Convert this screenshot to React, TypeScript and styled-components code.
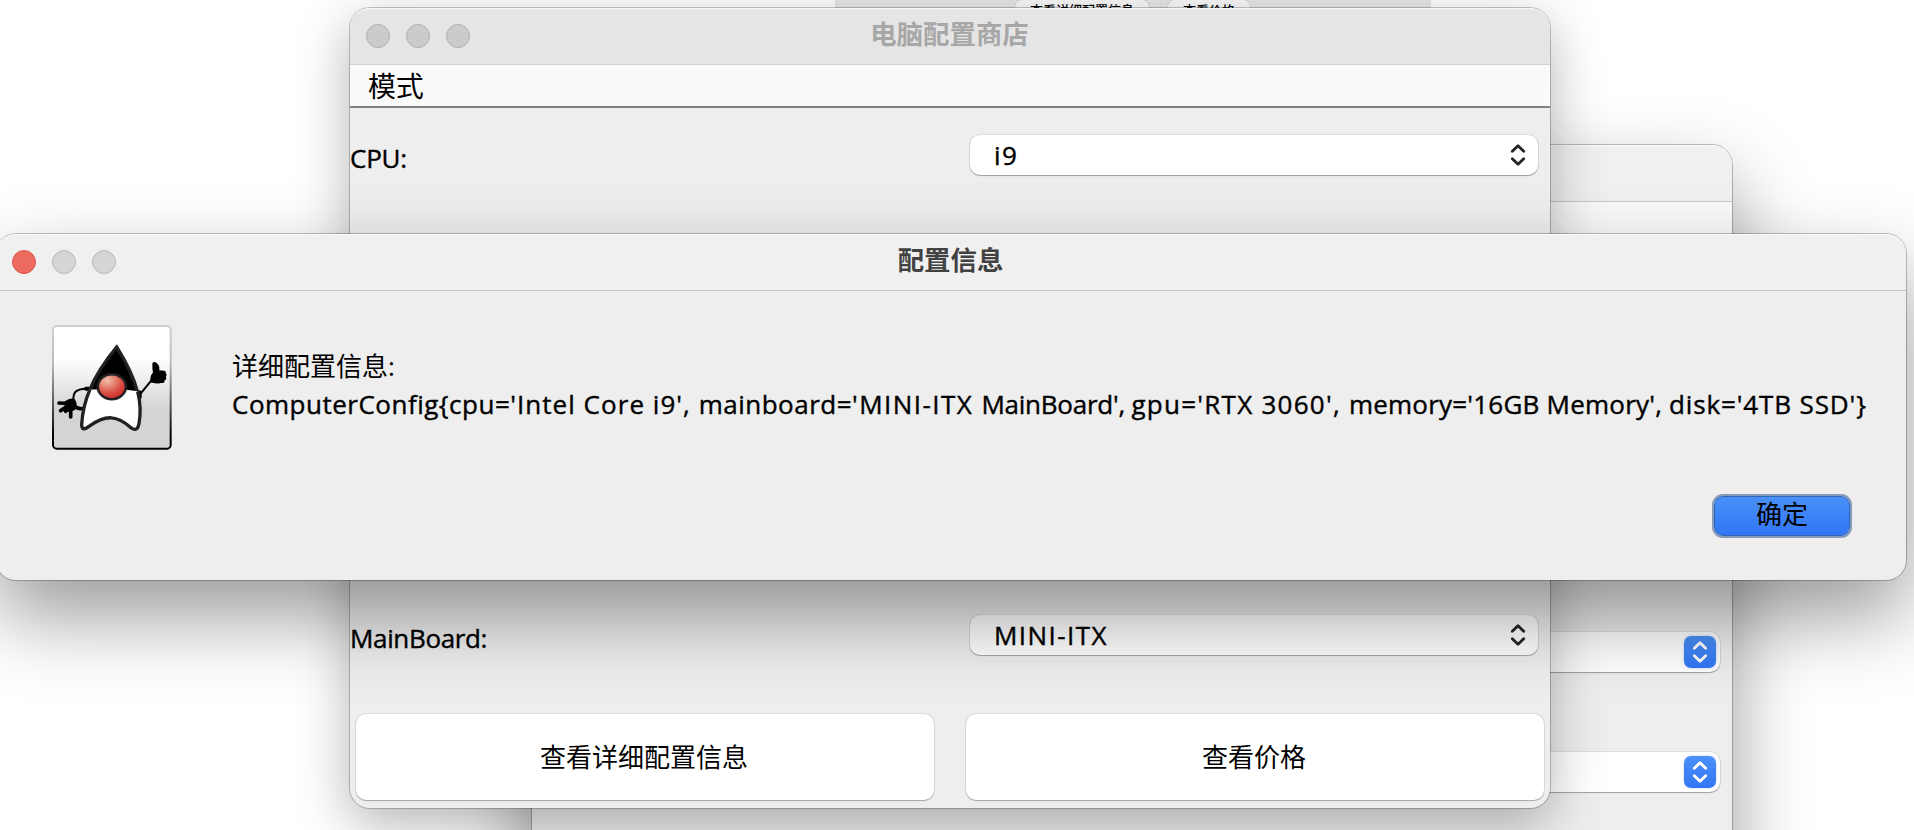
import React from "react";
import styled, { createGlobalStyle, css } from "styled-components";

const GlobalStyle = createGlobalStyle`
  html, body, #root { margin: 0; height: 100%; }
  body {
    overflow: hidden;
    background: #fff;
    color: #000;
    font: 26px/30px "Open Sans", "Noto Sans CJK SC", sans-serif;
  }
  * { box-sizing: border-box; }
`;

const Desktop = styled.main`
  position: relative;
  width: 1914px;
  height: 830px;
  overflow: hidden;
`;

const Window = styled.section<{ $x: number; $y: number; $w: number; $h: number; $focused?: boolean }>`
  position: absolute;
  left: ${(p) => p.$x}px;
  top: ${(p) => p.$y}px;
  width: ${(p) => p.$w}px;
  height: ${(p) => p.$h}px;
  display: flex;
  flex-direction: column;
  border-radius: 20px;
  background: #eee;
  box-shadow: ${(p) =>
    p.$focused
      ? "0 0 0 1px rgba(0,0,0,.24), 0 36px 80px rgba(0,0,0,.4)"
      : "0 0 0 1px rgba(0,0,0,.22), 0 16px 54px rgba(0,0,0,.3)"};
`;

const TitleBar = styled.header<{ $dim?: boolean }>`
  flex: none;
  height: 57px;
  display: grid;
  grid-template-columns: 1fr auto 1fr;
  align-items: center;
  padding: 0 16px;
  border-radius: 20px 20px 0 0;
  background: ${(p) => (p.$dim ? "#e5e5e5" : "#f0f0f0")};
  border-bottom: 1px solid ${(p) => (p.$dim ? "#d0d0d0" : "#c6c6c6")};
  box-shadow: inset 0 2px 1px -1px #fafafa;
`;

const Lights = styled.div`
  display: flex;
  gap: 16px;
`;

const Light = styled.span<{ $tone: "red" | "idle" | "dim" }>`
  width: 24px;
  height: 24px;
  border-radius: 50%;
  ${(p) =>
    ({
      red: css`background: #ed6a5e; border: 1px solid #d8564b;`,
      idle: css`background: #d5d5d5; border: 1px solid #b9b9b9;`,
      dim: css`background: #cbcbcb; border: 1px solid #b1b1b1;`,
    })[p.$tone]}
`;

const Title = styled.h1<{ $dim?: boolean }>`
  margin: 0;
  padding: 0 1px 4px 0;
  font-size: 26.4px;
  line-height: 30px;
  font-weight: 700;
  color: ${(p) => (p.$dim ? "#a7a7a7" : "#424242")};
`;

const MenuBar = styled.nav`
  flex: none;
  height: 43px;
  padding: 4px 18px 0;
  background: #fafafa;
  border-bottom: 2px solid #808080;
  font-size: 28px;
  line-height: 34px;
  letter-spacing: -0.3px;
`;

const Form = styled.div`
  flex: 1;
  display: grid;
  grid-template-columns: 1fr 1fr;
  grid-template-rows: repeat(6, 100px);
  gap: 20px;
`;

const Label = styled.label<{ $row: number; $spacing: number }>`
  grid-row: ${(p) => p.$row};
  grid-column: 1;
  align-self: center;
  letter-spacing: ${(p) => p.$spacing}px;
  -webkit-text-stroke: 0.4px #000;
`;

const Select = styled.div<{ $row: number; $accent?: boolean; $spacing?: number }>`
  grid-row: ${(p) => p.$row};
  grid-column: 2;
  height: 40px;
  margin: 27px 12px 0 10px;
  padding: 0 ${(p) => (p.$accent ? 4 : 14)}px 0 24px;
  display: flex;
  align-items: center;
  justify-content: space-between;
  border-radius: 10px;
  background: #fff;
  letter-spacing: ${(p) => p.$spacing ?? 0}px;
  -webkit-text-stroke: 0.4px #000;
  box-shadow: 0 0 0 1px rgba(0,0,0,.07), 0 1px 1px rgba(0,0,0,.28);
`;

const Stepper = styled.span<{ $accent?: boolean }>`
  display: grid;
  place-items: center;
  width: ${(p) => (p.$accent ? 32 : 14)}px;
  height: 32px;
  border-radius: 7px;
  color: ${(p) => (p.$accent ? "#fff" : "#262626")};
  ${(p) =>
    p.$accent &&
    css`
      background: linear-gradient(#4a90f7, #3176f5);
      box-shadow: 0 0 3px rgba(50,120,245,.3);
    `}
`;

const PushButton = styled.button`
  grid-row: 6;
  margin: 6px 6px 8px;
  padding: 0 2px 1px 0;
  border: 0;
  border-radius: 10px;
  background: #fff;
  color: #000;
  font: inherit;
  box-shadow: 0 0 0 1px rgba(0,0,0,.07), 0 1px 1px rgba(0,0,0,.25);
`;

const Content = styled.div`
  flex: 1;
  display: flex;
  align-items: flex-start;
  padding: 34px 30px 0 56px;
`;

const Message = styled.div`
  margin: 22px 0 0 60px;
  display: grid;
  grid-auto-rows: 38px;
  align-items: center;
  white-space: nowrap;
`;

const Detail = styled.p`
  margin: 0;
  white-space: pre;
`;

const Run = styled.span<{ $spacing: number }>`
  letter-spacing: ${(p) => p.$spacing}px;
  -webkit-text-stroke: 0.4px #000;
`;

const Actions = styled.footer`
  display: flex;
  justify-content: flex-end;
  padding: 0 56px 44px 0;
`;

const ConfirmButton = styled.button`
  width: 136px;
  height: 40px;
  padding: 0 0 4px;
  border: 1px solid #3066b8;
  border-radius: 9px;
  background: linear-gradient(#4a90f7, #3176f5);
  color: #000;
  font: inherit;
  box-shadow: 0 0 0 2px #849ab8;
`;

const Strip = styled.section`
  position: absolute;
  left: 835px;
  top: -30px;
  width: 596px;
  height: 60px;
  display: flex;
  align-items: flex-start;
  gap: 19px;
  padding: 30px 0 0 180px;
  background: #e8e8e8;
`;

const SmallButton = styled.button<{ $w: number }>`
  width: ${(p) => p.$w}px;
  height: 20px;
  padding: 0;
  border: 0;
  border-radius: 6px;
  background: #fafafa;
  color: #000;
  font: 500 13px/18px "Noto Sans CJK SC", sans-serif;
  box-shadow: 0 0 1px rgba(0,0,0,.4);
`;

const detailRuns: Array<[string, number]> = [
  ["ComputerConfig{cpu=", 0.5],
  ["'Intel Core i9', ", 1.04],
  ["mainboard=", 0.5],
  ["'MINI-ITX ", 1.45],
  ["MainBoard', ", -0.25],
  ["gpu='RTX 3060', ", 1.26],
  ["memory='16GB Memory', ", 0.22],
  ["disk='4TB SSD'}", 0.87],
];

function Chevrons({ accent }: { accent?: boolean }) {
  return (
    <Stepper $accent={accent}>
      <svg width="16" height="24" viewBox="0 0 16 24" fill="none" stroke="currentColor" strokeWidth="2.9" strokeLinecap="round" strokeLinejoin="round">
        <path d="M2.3 8.2 8 2.7l5.7 5.5M2.3 15.8 8 21.3l5.7-5.5" />
      </svg>
    </Stepper>
  );
}

function Duke() {
  return (
    <svg width="120" height="125" viewBox="66 45 360 375">
      <defs>
        <linearGradient id="frame" x1="0" y1="0" x2="0" y2="1">
          <stop offset="0" stopColor="#d0d0d0" />
          <stop offset=".3" stopColor="#bcbcbc" />
          <stop offset=".75" stopColor="#333" />
          <stop offset=".9" stopColor="#000" />
        </linearGradient>
        <linearGradient id="panel" x1="0" y1="0" x2="0" y2="1">
          <stop offset=".26" stopColor="#fff" />
          <stop offset=".68" stopColor="#d4d4d4" />
        </linearGradient>
        <radialGradient id="nose" cx=".34" cy=".25" r=".72">
          <stop offset="0" stopColor="#f0c1a8" />
          <stop offset=".75" stopColor="#d94a40" />
          <stop offset="1" stopColor="#cf332b" />
        </radialGradient>
      </defs>
      <rect x="69" y="48" width="353" height="368" rx="11" fill="url(#panel)" stroke="url(#frame)" strokeWidth="6" />
      <g stroke="#000" strokeLinecap="round" strokeLinejoin="round" fill="none">
        <path d="M174 236q-28-1-38 10-6 7-6 24" strokeWidth="6" />
        <path d="M126 282q14 16 32 14" strokeWidth="11" />
        <path d="M168 236h8" strokeWidth="12" />
        <path d="M122 281 87 279M120 284 92 302M122 286v35M123 284l-16 20" strokeWidth="11" />
        <path d="M107 275q18-10 26-5 9 14 0 28-20 11-27-4z" fill="#000" strokeWidth="5" />
        <path d="m330 253 36-44" strokeWidth="6" />
        <path d="M329 247v15" strokeWidth="12" />
        <path d="M373 162q-1 15 3 32M377 164q9 8 3 22l22 2M378 195h26M377 205h26M376 214l22-1" strokeWidth="12" />
        <path d="M372 188q-12 14-7 28l21 2 10-28z" fill="#000" strokeWidth="5" />
      </g>
      <path d="M260 111C228 150 199 190 180 238l23 10h88l31-4C310 199 285 151 260 111Z" fill="#000" stroke="#232021" strokeWidth="10" />
      <path d="M179 239C166 270 157 310 155 344c0 18 12 13 22 5 51-37 86-33 127 5 14 10 21 1 23-14 6-32 4-63-5-96l-33-5c-11 37-68 39-84-1Z" fill="#fff" />
      <path d="M180 238C166 270 157 310 155 344c0 18 12 13 22 5 51-37 86-33 127 5 14 10 21 1 23-14 6-32 4-63-4-95" fill="none" stroke="#232021" strokeWidth="10" strokeLinejoin="round" />
      <ellipse cx="245.500" cy="230" rx="42" ry="37.500" fill="url(#nose)" stroke="#232021" strokeWidth="7.500" />
    </svg>
  );
}

function WindowLights({ tones }: { tones: Array<"red" | "idle" | "dim"> }) {
  return (
    <Lights>
      {tones.map((tone, i) => (
        <Light key={i} $tone={tone} />
      ))}
    </Lights>
  );
}

export default function App() {
  return (
    <>
      <GlobalStyle />
      <Desktop>
        <Strip>
          <SmallButton $w={134}>查看详细配置信息</SmallButton>
          <SmallButton $w={82}>查看价格</SmallButton>
        </Strip>

        <Window $x={532} $y={145} $w={1200} $h={800} $focused>
          <TitleBar />
          <MenuBar />
          <Form>
            <Select $row={4} $accent><span /><Chevrons accent /></Select>
            <Select $row={5} $accent><span /><Chevrons accent /></Select>
          </Form>
        </Window>

        <Window $x={350} $y={8} $w={1200} $h={800}>
          <TitleBar $dim>
            <WindowLights tones={["dim", "dim", "dim"]} />
            <Title $dim>电脑配置商店</Title>
          </TitleBar>
          <MenuBar>模式</MenuBar>
          <Form>
            <Label $row={1} $spacing={-0.2}>CPU:</Label>
            <Select $row={1} $spacing={1.4}>i9<Chevrons /></Select>
            <Label $row={5} $spacing={-0.35}>MainBoard:</Label>
            <Select $row={5} $spacing={1.45}>MINI-ITX<Chevrons /></Select>
            <PushButton>查看详细配置信息</PushButton>
            <PushButton>查看价格</PushButton>
          </Form>
        </Window>

        <Window $x={-4} $y={234} $w={1910} $h={346} $focused>
          <TitleBar>
            <WindowLights tones={["red", "idle", "idle"]} />
            <Title>配置信息</Title>
          </TitleBar>
          <Content>
            <Duke />
            <Message>
              <Detail>详细配置信息:</Detail>
              <Detail>
                {detailRuns.map(([text, spacing]) => (
                  <Run key={text} $spacing={spacing}>{text}</Run>
                ))}
              </Detail>
            </Message>
          </Content>
          <Actions>
            <ConfirmButton>确定</ConfirmButton>
          </Actions>
        </Window>
      </Desktop>
    </>
  );
}
